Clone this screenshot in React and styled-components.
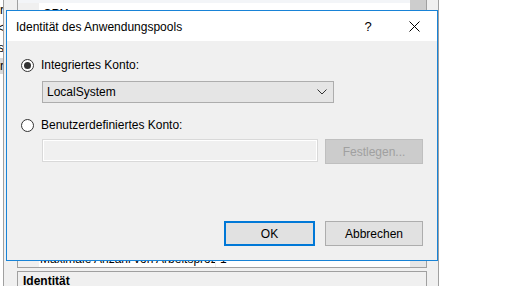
import React from 'react';
import styled, { createGlobalStyle } from 'styled-components';

const GlobalStyle = createGlobalStyle`
	html, body {
		margin: 0;
		padding: 0;
		background: #fff;
	}
	body {
		font-family: "Liberation Sans", Arial, sans-serif;
		font-size: 12px;
		color: #000;
	}
`;

const treeItems = [
	{ text: 'Server', top: 2 },
	{ text: '<', top: 20 },
	{ text: 'Anwendungspools', top: 40 },
	{ text: 'Server', top: 58, selected: true },
];

const App = () => {
	return (
		<Screen>
			<GlobalStyle />
			<TreePane>
				{treeItems.map(item => (
					<TreeItem key={item.top} $top={item.top} $selected={item.selected}>
						{item.text}
					</TreeItem>
				))}
			</TreePane>
			<MainPane>
				<Grid>
					<GridTop />
					<CategoryRow>
						<Gutter />
						<CategoryText>CPU</CategoryText>
						<ScrollThumb />
					</CategoryRow>
					<GridFill />
					<PropRow>
						<Gutter />
						<PropName>Maximale Anzahl von Arbeitsprozessen</PropName>
						<PropValue>1</PropValue>
						<ScrollTrack />
					</PropRow>
				</Grid>
				<Description>
					<DescTitle>Identität</DescTitle>
				</Description>
			</MainPane>

			<Dialog>
				<TitleBar>
					<Title>Identität des Anwendungspools</Title>
					<TitleButton>?</TitleButton>
					<TitleButton>
						<svg width="11" height="11" viewBox="0 0 11 11">
							<path d="M0.5 0.5 L10.5 10.5 M10.5 0.5 L0.5 10.5" stroke="#000" strokeWidth="1" fill="none" />
						</svg>
					</TitleButton>
				</TitleBar>
				<Body>
					<Option>
						<Radio $checked />
						<span>Integriertes Konto:</span>
					</Option>
					<Select>
						<span>LocalSystem</span>
						<svg width="10" height="6" viewBox="0 0 10 6">
							<path d="M0.5 0.5 L5 5 L9.5 0.5" stroke="#333" strokeWidth="1" fill="none" />
						</svg>
					</Select>
					<Option $gap={15}>
						<Radio />
						<span>Benutzerdefiniertes Konto:</span>
					</Option>
					<InputRow>
						<Input />
						<Button disabled>Festlegen...</Button>
					</InputRow>
					<Footer>
						<Button $default>OK</Button>
						<Button>Abbrechen</Button>
					</Footer>
				</Body>
			</Dialog>
		</Screen>
	)
}

export default App

const Screen = styled.div`
	position: relative;
	display: flex;
	width: 527px;
	height: 286px;
	overflow: hidden;
	background: #fff;
`;
const TreePane = styled.div`
	position: relative;
	width: 3px;
	height: 100%;
	overflow: hidden;
	background: #fff;
	border-right: 1px solid #a0a0a0;
`;
const TreeItem = styled.div`
	position: absolute;
	right: -1px;
	top: ${p => p.$top}px;
	height: 16px;
	line-height: 16px;
	padding-left: 4px;
	white-space: nowrap;
	background: ${p => p.$selected ? '#d9d9d9' : 'transparent'};
`;
const MainPane = styled.div`
	width: 435px;
	height: 100%;
	display: flex;
	flex-direction: column;
	padding-left: 13px;
	box-sizing: border-box;
	background: #f0f0f0;
	border-right: 1px solid #a0a0a0;
`;
const Grid = styled.div`
	flex-shrink: 0;
	width: 410px;
	height: 268px;
	display: flex;
	flex-direction: column;
	background: #fff;
	border: 1px solid #a0a0a0;
	border-top: none;
	box-sizing: border-box;
`;
const GridTop = styled.div`
	height: 3px;
	background: #f3f5f8;
	margin-right: 16px;
`;
const CategoryRow = styled.div`
	display: flex;
	height: 16px;
`;
const Gutter = styled.div`
	width: 21px;
	background: #f0f0f0;
`;
const CategoryText = styled.div`
	flex: 1;
	padding-left: 4px;
	padding-top: 4px;
	font-weight: bold;
	line-height: 14px;
`;
const ScrollThumb = styled.div`
	width: 16px;
	margin-top: -3px;
	background: #cdcdcd;
`;
const GridFill = styled.div`
	flex: 1;
`;
const PropRow = styled.div`
	display: flex;
	height: 16px;
	line-height: 15px;
	border-top: 1px solid #f0f0f0;
`;
const PropName = styled.div`
	width: 175px;
	padding: 1px 0 0 1px;
	white-space: nowrap;
	overflow: hidden;
	border-right: 1px solid #f0f0f0;
`;
const PropValue = styled.div`
	flex: 1;
	padding: 1px 0 0 4px;
`;
const ScrollTrack = styled.div`
	width: 16px;
	background: #e6e6e6;
`;
const Description = styled.div`
	width: 410px;
	margin-top: 3px;
	flex: 1;
	min-height: 0;
	overflow: hidden;
	border: 1px solid #a0a0a0;
	border-bottom: none;
	box-sizing: border-box;
	padding: 2px 5px 0;
`;
const DescTitle = styled.div`
	font-weight: bold;
	line-height: 14px;
`;
const Dialog = styled.div`
	position: absolute;
	left: 6px;
	top: 10px;
	width: 432px;
	height: 251px;
	box-sizing: border-box;
	border: 1px solid #1883d7;
	display: flex;
	flex-direction: column;
	background: #f0f0f0;
`;
const TitleBar = styled.div`
	height: 30px;
	display: flex;
	align-items: center;
	background: #fff;
	padding-left: 9px;
`;
const Title = styled.div`
	flex: 1;
	font-size: 12px;
	padding-top: 1px;
`;
const TitleButton = styled.div`
	width: 46px;
	height: 30px;
	display: flex;
	align-items: center;
	justify-content: center;
	font-size: 13px;
`;
const Body = styled.div`
	flex: 1;
	display: flex;
	flex-direction: column;
	padding: 17px 14px 14px 14px;
`;
const Option = styled.div`
	display: flex;
	align-items: center;
	gap: 7px;
	height: 14px;
	margin-top: ${p => p.$gap || 0}px;
`;
const Radio = styled.div`
	position: relative;
	width: 13px;
	height: 13px;
	box-sizing: border-box;
	border: 1px solid #333;
	border-radius: 50%;
	background: #fff;
	&::after {
		content: '';
		display: ${p => p.$checked ? 'block' : 'none'};
		position: absolute;
		left: 2px;
		top: 2px;
		width: 7px;
		height: 7px;
		border-radius: 50%;
		background: #333;
	}
`;
const Select = styled.div`
	margin: 9px 0 0 21px;
	width: 292px;
	height: 22px;
	box-sizing: border-box;
	display: flex;
	align-items: center;
	justify-content: space-between;
	padding: 0 6px 0 4px;
	background: #e5e5e5;
	border: 1px solid #adadad;
`;
const InputRow = styled.div`
	display: flex;
	gap: 7px;
	margin: 7px 0 0 21px;
`;
const Input = styled.div`
	width: 276px;
	height: 23px;
	box-sizing: border-box;
	border: 1px solid #d9d9d9;
	box-shadow: inset 0 0 0 1px #fff;
	background: #f0f0f0;
`;
const Button = styled.button`
	width: ${p => p.$default ? 91 : 98}px;
	height: 25px;
	box-sizing: border-box;
	padding: 0;
	font-family: "Liberation Sans", Arial, sans-serif;
	font-size: 12px;
	color: #000;
	background: #e1e1e1;
	border: ${p => p.$default ? '2px solid #0078d7' : '1px solid #adadad'};
	&:disabled {
		background: #cccccc;
		border-color: #bfbfbf;
		color: #a0a0a0;
	}
`;
const Footer = styled.div`
	margin-top: auto;
	display: flex;
	justify-content: flex-end;
	gap: 10px;
`;
